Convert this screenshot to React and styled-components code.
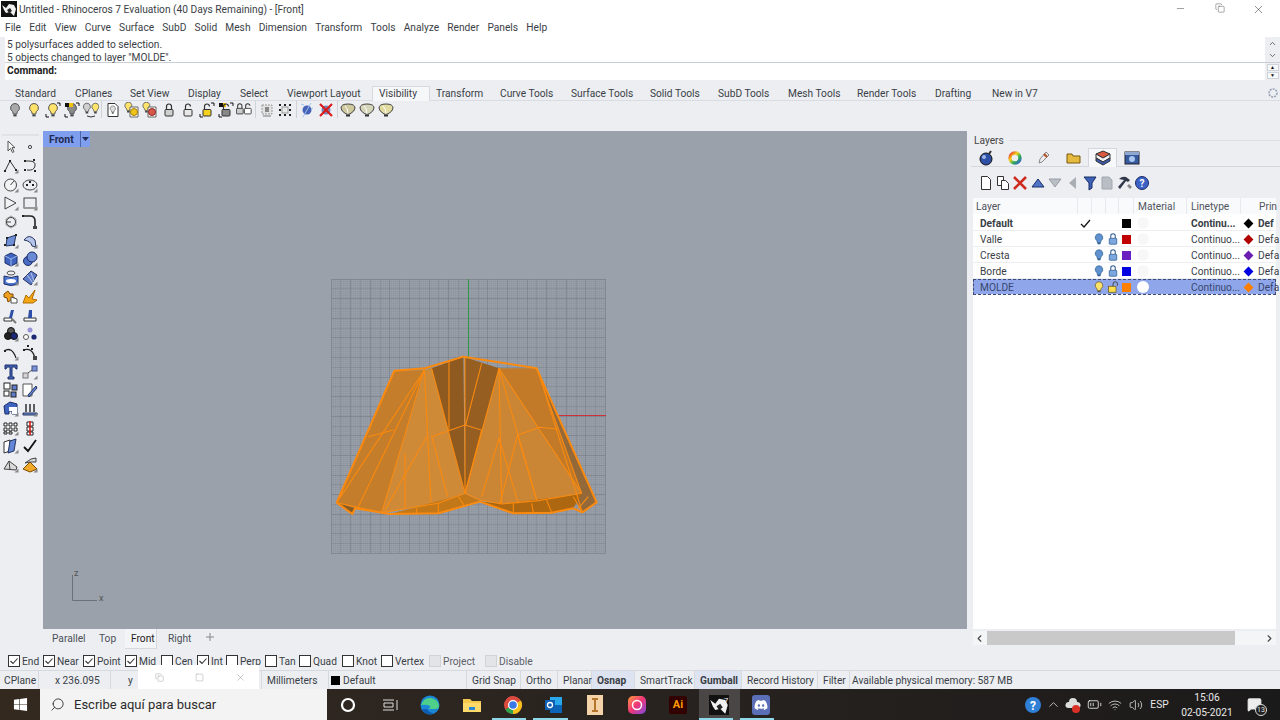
import React from "react";
import styled, { createGlobalStyle } from "styled-components";
import { FaWindows, FaDiscord } from "react-icons/fa";
import { ChevronUp, ChevronDown, ChevronLeft, ChevronRight, Search, Wifi, Volume2, Minus, Square, X, Copy, BatteryMedium, MessageSquare } from "lucide-react";

const Global = createGlobalStyle`
  html, body { margin: 0; padding: 0; width: 1280px; height: 720px; overflow: hidden; }
  * { box-sizing: border-box; }
  body { font-family: Roboto, "Noto Sans", sans-serif; font-size: 10.2px; color: #3a3e46; background: #eceef2; }
`;

const Shell = styled.div`
  position: relative;
  width: 1280px;
  height: 720px;
  display: flex;
  flex-direction: column;
  background: #eceef2;
`;

const TitleBar = styled.div`
  height: 18px;
  display: flex;
  align-items: center;
  background: #fff;
  padding-left: 1px;
`;
const TitleText = styled.span`
  margin-left: 2px;
  flex: 1;
`;
const WinButtons = styled.div`
  display: flex;
  color: #333;
  padding-right: 2px;
`;
const WinButton = styled.span`
  width: 39px;
  display: flex;
  justify-content: center;
`;
const MenuBar = styled.div`
  height: 19px;
  display: flex;
  align-items: center;
  gap: 8.2px;
  padding-left: 5px;
  background: #fff;
`;

const CommandPanel = styled.div`
  height: 43px;
  display: flex;
  flex-direction: column;
  margin-left: 5px;
`;
const LogRow = styled.div`
  height: 26px;
  display: flex;
  background: #fff;
  border-bottom: 1px solid #c9ced6;
`;
const PromptRow = styled.div`
  height: 17px;
  display: flex;
  background: #fff;
`;
const LogText = styled.div`
  flex: 1;
  padding: 1px 0 0 2px;
  line-height: 13px;
`;
const PromptText = styled.div`
  flex: 1;
  padding-left: 2px;
  font-weight: 700;
  line-height: 16px;
  color: #222;
`;
const ScrollCol = styled.div`
  width: 15px;
  background: #eceef2;
  display: flex;
  flex-direction: column;
  justify-content: space-around;
  align-items: center;
  color: #444;
`;
const MiniArrow = styled.span`
  width: 12px;
  height: 7px;
  background: #f7f8fa;
  border: 1px solid #d0d3d9;
  color: #111;
  font-size: 5px;
  line-height: 5px;
  text-align: center;
`;

const ToolTabs = styled.div`
  margin-top: 6px;
  height: 15px;
  display: flex;
  align-items: center;
  padding-left: 15px;
  border-bottom: 1px solid #d9dce2;
  isolation: isolate;
`;
const ToolTab = styled.span`
  position: relative;
  width: ${(p) => p.$w}px;
  flex: none;
  white-space: nowrap;
  &::before {
    content: "";
    display: ${(p) => (p.$active ? "block" : "none")};
    position: absolute;
    left: -7px;
    right: 6px;
    top: -2px;
    bottom: -2px;
    background: #f6f7f9;
    border: 1px solid #d6d9de;
    border-bottom: 0;
    z-index: -1;
  }
`;
const Gear = styled.span`
  margin-left: auto;
  margin-right: 1px;
  display: flex;
`;
const IconRow = styled.div`
  height: 19px;
  padding: 0 0 2px 6px;
  display: flex;
  align-items: center;
`;
const IconSlot = styled.span`
  width: ${(p) => p.$w || 18.8}px;
  height: 18px;
  flex: none;
  display: flex;
  align-items: center;
  justify-content: center;
`;
const Sep = styled.span`
  width: 1px;
  height: 17px;
  background: #cfd2d8;
  flex: none;
  margin: 0 1.2px;
`;

const Main = styled.div`
  margin-top: 11px;
  height: 520px;
  display: flex;
`;
const LeftBar = styled.div`
  width: 43px;
  flex: none;
  padding: 3px 0 0 1px;
`;
const Grip = styled.div`
  height: 2px;
  width: 37px;
  margin: 0 0 3px 1px;
  background: #dfe2e7;
`;
const LeftGrid = styled.div`
  display: grid;
  grid-template-columns: 19px 19px;
  grid-auto-rows: 18.7px;
  justify-items: center;
  align-items: center;
`;
const CenterCol = styled.div`
  width: 924px;
  flex: none;
  display: flex;
  flex-direction: column;
`;
const Viewport = styled.div`
  position: relative;
  height: 498px;
  background: #9aa1ab;
`;
const ViewSvg = styled.svg`
  display: block;
  width: 924px;
  height: 498px;
`;
const ViewLabel = styled.div`
  position: absolute;
  left: 0;
  top: 0;
  width: 47px;
  height: 16px;
  background: #7f9fee;
  color: #1f2b55;
  font-weight: 700;
  font-size: 10.5px;
  display: flex;
  align-items: center;
  padding-left: 6px;
  justify-content: space-between;
`;
const ViewArrow = styled.span`
  width: 10px;
  height: 16px;
  border-left: 1px solid #4c66a8;
  display: flex;
  align-items: center;
  justify-content: center;
`;

const LayerPanel = styled.div`
  margin-left: 6px;
  flex: 1;
  display: flex;
  flex-direction: column;
  min-width: 0;
`;
const PanelHead = styled.div`
  height: 16px;
  display: flex;
  align-items: center;
  gap: 5px;
  padding-left: 1px;
  color: #444;
  margin-top: 1px;
`;
const HeadLine = styled.span`
  flex: 1;
  height: 1px;
  background: #dcdfe4;
`;
const PanelTabs = styled.div`
  height: 19px;
  display: flex;
  margin-left: -2px;
  padding-left: 0.5px;
  border-bottom: 1px solid #d3d6dc;
  align-items: center;
`;
const PanelTab = styled.span`
  width: 29.2px;
  height: 19px;
  flex: none;
  display: flex;
  align-items: center;
  justify-content: center;
  background: ${(p) => (p.$active ? "#f7f8fa" : "transparent")};
  border: 1px solid ${(p) => (p.$active ? "#d3d6dc" : "transparent")};
  border-bottom: 0;
`;
const PanelIcons = styled.div`
  height: 31px;
  display: flex;
  align-items: center;
  padding-left: 4px;
`;
const LayerTable = styled.div`
  flex: 1;
  background: #fff;
  margin-right: 4px;
  display: flex;
  flex-direction: column;
`;
const LayerRow = styled.div`
  height: 16px;
  display: grid;
  grid-template-columns: 105px 14px 14px 13px 15px 53px 54px 1fr;
  align-items: center;
  white-space: nowrap;
  font-weight: ${(p) => (p.$bold ? 700 : 400)};
  border-bottom: 1px solid #eceef1;
  color: ${(p) => (p.$selected ? "#38466e" : "#3a3e46")};
  background: ${(p) => (p.$selected ? "#8fa6ea" : "#fff")};
  outline: ${(p) => (p.$selected ? "1px dashed #3f4a70" : "none")};
  outline-offset: -1px;
`;
const HeadRow = styled(LayerRow)`
  height: 17px;
  background: #f9fafb;
  border-bottom-color: #fff;
  color: #50545c;
`;
const Cell = styled.span`
  display: flex;
  align-items: center;
  justify-content: ${(p) => (p.$center ? "center" : "flex-start")};
  padding-left: ${(p) => p.$pad || 0}px;
  padding-top: ${(p) => (p.$rule ? 0 : 1)}px;
  height: 100%;
  border-right: ${(p) => (p.$rule ? "1px solid #e8eaee" : "0")};
`;
const Swatch = styled.span`
  width: 9px;
  height: 9px;
  flex: none;
  background: ${(p) => p.$c};
`;
const MaterialDot = styled.span`
  width: 12px;
  height: 12px;
  border-radius: 50%;
  background: ${(p) => (p.$on ? "#fff" : "#f7f7f8")};
`;
const Diamond = styled.span`
  width: 7px;
  height: 7px;
  transform: rotate(45deg);
  background: ${(p) => p.$c};
  flex: none;
  margin: 0 6px 0 4px;
`;
const TableFill = styled.div`
  flex: 1;
`;
const HScroll = styled.div`
  height: 14px;
  margin: 2px 4px 6px 0;
  background: #f4f5f7;
  display: flex;
  align-items: center;
  justify-content: space-between;
  color: #444;
  padding: 0 1px;
`;
const HThumb = styled.span`
  width: 248px;
  height: 14px;
  background: #c9c9c9;
  margin-right: 28px;
`;

const ViewTabs = styled.div`
  height: 22px;
  display: flex;
  align-items: center;
  padding: 0 0 4px 9px;
  isolation: isolate;
`;
const ViewTab = styled.span`
  position: relative;
  width: ${(p) => p.$w}px;
  flex: none;
  color: ${(p) => (p.$active ? "#222" : "#4a4e56")};
  &::before {
    content: "";
    display: ${(p) => (p.$active ? "block" : "none")};
    position: absolute;
    left: -6px;
    right: 11px;
    top: -4px;
    bottom: -5px;
    background: #f3f4f7;
    border: 1px solid #d6d9de;
    border-top: 0;
    border-left: 0;
    z-index: -1;
  }
`;

const OsnapBar = styled.div`
  height: 20px;
  display: flex;
  align-items: center;
  padding: 1px 0 0 8px;
  border-bottom: 1px solid #d6d9de;
`;
const Snap = styled.label`
  width: ${(p) => p.$w}px;
  flex: none;
  display: flex;
  align-items: center;
  gap: 2px;
  color: ${(p) => (p.$off ? "#5c6068" : "#3a3e46")};
`;
const Box = styled.span`
  width: 12px;
  height: 12px;
  flex: none;
  background: ${(p) => (p.$off ? "#e3e4e7" : "#fff")};
  border: 1px solid ${(p) => (p.$off ? "#d2d3d6" : "#333")};
  display: flex;
`;

const StatusBar = styled.div`
  height: 18px;
  display: flex;
`;
const StatusCell = styled.span`
  width: ${(p) => p.$w}px;
  flex: ${(p) => (p.$w ? "none" : 1)};
  display: flex;
  align-items: center;
  gap: 3px;
  padding-left: ${(p) => p.$pad ?? 4}px;
  white-space: nowrap;
  font-weight: ${(p) => (p.$on ? 700 : 400)};
  background: ${(p) => (p.$on ? "#dde3f0" : "transparent")};
  border-right: ${(p) => (p.$last ? 0 : "1px solid #d6d9de")};
`;
const SmallSwatch = styled.span`
  width: 9px;
  height: 9px;
  background: #000;
`;

const TaskBar = styled.div`
  height: 31px;
  display: flex;
  align-items: stretch;
  background: linear-gradient(90deg, #33291f 0%, #2a2420 45%, #1b1a1a 100%);
  color: #fff;
`;
const StartBtn = styled.span`
  width: 40px;
  display: flex;
  align-items: center;
  justify-content: center;
  flex: none;
`;
const SearchBox = styled.div`
  width: 287px;
  flex: none;
  background: #f3f3f3;
  color: #2b2b2b;
  display: flex;
  align-items: center;
  gap: 9px;
  padding-left: 10px;
  font-size: 13px;
`;
const TaskApps = styled.div`
  display: flex;
  width: 454px;
  flex: none;
`;
const TaskApp = styled.span`
  position: relative;
  width: 41.3px;
  flex: none;
  display: flex;
  align-items: center;
  justify-content: center;
  background: ${(p) => (p.$active ? "#4a4645" : "transparent")};
  &::after {
    content: "";
    display: ${(p) => (p.$open ? "block" : "none")};
    position: absolute;
    left: 0;
    right: 7px;
    bottom: 0;
    height: 2px;
    background: #8fd8ea;
  }
`;
const Tray = styled.div`
  flex: 1;
  display: flex;
  align-items: center;
  padding-left: 242px;
  color: #e8e8e8;
`;
const TraySlot = styled.span`
  width: ${(p) => p.$w || 20.5}px;
  flex: none;
  display: flex;
  justify-content: center;
  align-items: center;
`;
const Clock = styled.span`
  width: 62px;
  margin-left: 3px;
  text-align: center;
  line-height: 15px;
  flex: none;
`;
const NoteBadge = styled.span`
  position: absolute;
  right: 3px;
  top: 15px;
  width: 12px;
  height: 12px;
  border-radius: 50%;
  border: 1px solid #ddd;
  background: #222;
  font-size: 7px;
  line-height: 10px;
  text-align: center;
`;
const NoteSlot = styled.span`
  position: relative;
  width: 32px;
  height: 100%;
  flex: none;
  display: flex;
  align-items: center;
  justify-content: center;
`;
const AiTile = styled.span`
  width: 18px;
  height: 18px;
  border-radius: 2px;
  background: #330000;
  color: #ff9a00;
  font-weight: 700;
  font-size: 11px;
  display: flex;
  align-items: center;
  justify-content: center;
`;
const DiscordTile = styled.span`
  width: 18px;
  height: 20px;
  border-radius: 3px;
  background: #5b6fb8;
  display: flex;
  align-items: center;
  justify-content: center;
`;
const GhostWindow = styled.div`
  position: absolute;
  left: 138px;
  top: 665px;
  width: 121px;
  height: 24px;
  background: #fff;
  display: flex;
  align-items: center;
  color: #888;
`;
const GhostBtn = styled.span`
  width: 39px;
  margin-left: 3px;
  display: flex;
  justify-content: center;
`;

// ---- drawn icons ----
const Ico = ({ s = 16, children }) => (
  <svg width={s} height={s} viewBox="0 0 16 16">{children}</svg>
);
const Bulb = ({ c = "#ffe36a", o = "#555" }) => (
  <>
    <path d="M8 1.5a4.4 4.4 0 0 0-2.4 8.1L6.3 12h3.4l.7-2.4A4.4 4.4 0 0 0 8 1.5z" fill={c} stroke={o} />
    <rect x="6.4" y="12.4" width="3.2" height="2" fill="#444" />
  </>
);
const FatBulb = ({ c }) => (
  <>
    <path d="M1 6q0-4 7-4t7 4q0 3-5 6H6q-5-3-5-6z" fill={c} stroke="#444" />
    <path d="M5 4q3 2 3 8" fill="none" stroke="#fff" />
    <rect x="6" y="12.5" width="4" height="2" fill="#333" />
  </>
);
const Lock = ({ c = "#e4e4e4", o = "#333", open }) => (
  <>
    <rect x="4" y="7.5" width="8" height="6.5" rx="1" fill={c} stroke={o} />
    <path d={open ? "M5.5 7.5V4.5a2.5 2.5 0 0 1 5 0" : "M5.5 7.5V4.5a2.5 2.5 0 0 1 5 0v3"} fill="none" stroke={o} strokeWidth="1.2" />
  </>
);
const Marks = () => <path d="M1 12v3h3M15 4V1h-3" fill="none" stroke="#111" />;
const Doc = () => <path d="M3 1.5h7l3 3v10H3z" fill="#fff" stroke="#333" />;

const topIcons = [
  <Ico><Bulb c="#a9a9a9" /></Ico>,
  <Ico><Bulb /></Ico>,
  <Ico><Bulb /><Marks /></Ico>,
  <Ico><Bulb c="#8a8a8a" /><rect x="1" y="1" width="5" height="4" fill="#111" /><rect x="5" y="1" width="4" height="4" fill="#f2c200" /><Marks /></Ico>,
  <Ico><g transform="translate(-2.5 0) scale(.8)"><Bulb c="#cfcfcf" /></g><g transform="translate(6 0) scale(.8)"><Bulb /></g><path d="M4 14q4 2 8 0" fill="none" stroke="#333" /></Ico>,
  "sep",
  <Ico><Doc /><g transform="translate(3 3) scale(.6)"><Bulb c="#ddd" /></g></Ico>,
  <Ico><g transform="translate(-2 -1) scale(.8)"><Bulb /></g><path d="M6 5h8v10H6z" fill="#fff" stroke="#666" /><circle cx="10" cy="10" r="3.5" fill="#f0c419" stroke="#a3800c" /></Ico>,
  <Ico><g transform="translate(-2 -1) scale(.8)"><Bulb /></g><path d="M6 5h8v10H6z" fill="#fff" stroke="#666" /><circle cx="10" cy="10" r="3.5" fill="#d9584a" stroke="#8a2b22" /></Ico>,
  <Ico><Lock c="#cfcfcf" /></Ico>,
  <Ico><Lock c="#e8e8e8" open /></Ico>,
  <Ico><Lock c="#f5d21f" open /><Marks /></Ico>,
  <Ico><rect x="1" y="1" width="4" height="4" fill="#111" /><rect x="5" y="1" width="3" height="4" fill="#f2c200" /><Lock c="#888" open /><Marks /></Ico>,
  <Ico><g transform="translate(-3 0) scale(.85)"><Lock c="#ccc" /></g><g transform="translate(5 0) scale(.85)"><Lock c="#fff" open /></g></Ico>,
  "sep",
  <Ico><rect x="3" y="3" width="10" height="9" fill="#e3e3e3" stroke="#999" strokeDasharray="2 1" /><rect x="6" y="5" width="4" height="5" fill="#888" /><path d="M4 14h8" stroke="#777" /></Ico>,
  <Ico><path d="M2 2h2v2H2zM7 2h2v2H7zM12 2h2v2h-2zM2 7h2v2H2zM12 7h2v2h-2zM2 12h2v2H2zM7 12h2v2H7zM12 12h2v2h-2z" fill="#222" /><rect x="5" y="5" width="6" height="6" fill="#e8e8e8" stroke="#999" /></Ico>,
  "sep",
  <Ico><circle cx="8" cy="8" r="4.5" fill="#4663b8" /><path d="M12 1l-8 14M2 2l3 1M14 6l-2 1" stroke="#9cc3f0" /></Ico>,
  <Ico><circle cx="8" cy="8" r="4.5" fill="#7a86b5" /><path d="M2 2l12 12M14 2L2 14" stroke="#d81a1a" strokeWidth="2.2" /></Ico>,
  "sep",
  <Ico><FatBulb c="#cfc9a0" /></Ico>,
  <Ico><FatBulb c="#d6d6bb" /></Ico>,
  <Ico><FatBulb c="#e3dca0" /></Ico>,
];

const Corner = () => <path d="M15.5 15.5h-4l4-4z" fill="#888" />;
const d = (x, y) => <rect x={x - 1} y={y - 1} width="2" height="2" fill="#222" />;
const leftIcons = [
  <Ico><path d="M5 2v10l2.5-2.5 2 4 1.5-.8-2-4H12z" fill="#f6f6f6" stroke="#555" /></Ico>,
  <Ico><circle cx="8" cy="8" r="1.6" fill="none" stroke="#444" /></Ico>,
  <Ico><path d="M2 13L7 3l6 9" fill="none" stroke="#333" />{d(2, 13)}{d(7, 3)}{d(13, 12)}<Corner /></Ico>,
  <Ico><path d="M3 3h4q7 0 6 5t-8 4" fill="none" stroke="#333" />{d(3, 3)}{d(12, 2)}{d(3, 12)}{d(13, 13)}</Ico>,
  <Ico><circle cx="7.5" cy="8" r="6" fill="#f2f3f5" stroke="#444" /><path d="M7.5 8l3.5-4" stroke="#444" /><Corner /></Ico>,
  <Ico><ellipse cx="8" cy="8" rx="7" ry="5" fill="none" stroke="#444" />{d(5, 8)}{d(11, 8)}{d(8, 5)}<Corner /></Ico>,
  <Ico><path d="M2 2l11 6-11 6z" fill="#f2f3f5" stroke="#444" /><Corner /></Ico>,
  <Ico><rect x="2" y="3" width="12" height="10" fill="#eceef1" stroke="#444" /><path d="M2 13h12" stroke="#999" strokeWidth="2" /><Corner /></Ico>,
  <Ico><path d="M8 2l5 3v6l-5 3-5-3V5z" fill="none" stroke="#999" /><circle cx="8" cy="8" r="4.5" fill="none" stroke="#444" /><path d="M3 8h5" stroke="#444" /></Ico>,
  <Ico><path d="M1 2h7q5 0 5 5v5" fill="none" stroke="#222" strokeWidth="1.6" />{d(1, 2)}<rect x="11" y="12" width="4" height="3" fill="#444" /></Ico>,
  <Ico><path d="M4 5l9-3-2 10-8 1z" fill="#6f8fd6" stroke="#26345f" />{d(4, 5)}{d(13, 2)}{d(11, 12)}{d(2, 12)}<Corner /></Ico>,
  <Ico><path d="M2 7q5-7 11 0l1 7-4-1q-1-5-8-6z" fill="#b6c6ea" stroke="#26345f" /><Corner /></Ico>,
  <Ico><path d="M2 5l6-3 6 3v7l-6 3-6-3z" fill="#3f64bf" stroke="#1b2c66" /><path d="M2 5l6 3 6-3M8 8v7" stroke="#9cb4ea" fill="none" /><Corner /></Ico>,
  <Ico><circle cx="6" cy="10" r="4.5" fill="#496cc4" stroke="#1b2c66" /><circle cx="10" cy="6" r="5" fill="#6b8ad6" stroke="#1b2c66" /><Corner /></Ico>,
  <Ico><ellipse cx="8" cy="3" rx="4" ry="2" fill="none" stroke="#555" /><path d="M1 6v8q7 3 14 0V6q-7 3-14 0z" fill="#4d77d3" stroke="#1b2c66" /><ellipse cx="8" cy="11" rx="5" ry="2" fill="#fff" /><Corner /></Ico>,
  <Ico><path d="M1 9l8-8 6 4-6 10z" fill="#5e7cc9" stroke="#26345f" /><path d="M5 5l6 8M9 3l3 8" stroke="#b6c6ea" /><Corner /></Ico>,
  <Ico><path d="M1 5l4-3 2 3 3 0v3l3 2-3 3-2-2-3 2-1-4-3-1z" fill="#f0a020" stroke="#7a4a00" /><path d="M8 8l6 2v4H8z" fill="#fff" stroke="#555" /></Ico>,
  <Ico><path d="M1 14l3-8 3 3 6-8-3 9 5 1-4 3z" fill="#f5a814" stroke="#b06b00" /></Ico>,
  <Ico><path d="M1 10h8v3H1z" fill="#fff" stroke="#333" /><path d="M8 2h3l-2 8H6z" fill="#2e4ea8" /><path d="M9 11l4 4" stroke="#777" strokeWidth="2" /></Ico>,
  <Ico><path d="M2 10h12v3H2z" fill="#fff" stroke="#333" /><path d="M7 2h3v8H6z" fill="#2e4ea8" /></Ico>,
  <Ico><circle cx="8" cy="5" r="3.5" fill="#555" stroke="#111" /><circle cx="5" cy="10" r="3.5" fill="#222" stroke="#111" /><circle cx="11" cy="10" r="3.5" fill="#1c2a75" stroke="#111" /><Corner /></Ico>,
  <Ico><circle cx="8" cy="4" r="2.5" fill="#9a94d6" /><circle cx="4" cy="11" r="2.5" fill="#fff" stroke="#555" /><circle cx="12" cy="11" r="2.6" fill="#1c2a75" /></Ico>,
  <Ico><path d="M1 6q8-5 12 7" fill="none" stroke="#222" strokeWidth="1.3" />{d(2, 6)}<Corner /></Ico>,
  <Ico><path d="M1 5q10-3 12 9" fill="none" stroke="#222" strokeWidth="1.3" />{d(6, 1)}{d(10, 4)}{d(2, 5)}<rect x="11" y="11" width="4" height="4" fill="#444" /></Ico>,
  <Ico><path d="M2 1h12v4h-1l-1-2H9v10h2v2H5v-2h2V3H4L3 5H2z" fill="#4668bf" stroke="#1b2c66" /></Ico>,
  <Ico><rect x="1" y="9" width="5" height="5" fill="#d5d5d5" stroke="#777" /><rect x="10" y="2" width="5" height="5" fill="#7d93d4" stroke="#3c4f88" /><path d="M6 9l4-3" stroke="#555" /><Corner /></Ico>,
  <Ico><rect x="1" y="1" width="6" height="6" fill="#fff" stroke="#222" /><rect x="9" y="3" width="5" height="5" fill="#5e7cc9" stroke="#222" /><rect x="1" y="9" width="5" height="5" fill="#fff" stroke="#222" /><rect x="8" y="10" width="5" height="5" fill="#5e7cc9" stroke="#222" /></Ico>,
  <Ico><path d="M1 2h9v12H1z" fill="#fff" stroke="#555" /><path d="M6 13l8-9 1 2-8 9z" fill="#6286d8" stroke="#26345f" /></Ico>,
  <Ico><path d="M1 5l6-4 7 2v10H9v-3H6v3H2z" fill="#3f64bf" stroke="#1b2c66" /><path d="M6 6h8v7H9v-3H6z" fill="#fff" /><Corner /></Ico>,
  <Ico><path d="M1 12h14v2H1z" fill="#6f8fd6" stroke="#26345f" /><path d="M4 3v8M8 3v8M12 3v8" stroke="#222" strokeWidth="1.4" /><Corner /></Ico>,
  <Ico><path d="M1 3h3v3H1zM6 3h3v3H6zM11 3h3v3h-3zM1 8h3v3H1zM6 8h3v3H6zM11 8h3v3h-3zM1 12h3v2H1zM6 12h3v2H6z" fill="#fff" stroke="#222" /><Corner /></Ico>,
  <Ico><path d="M5 2h6v4H5zM5 7h6v4H5zM5 12h6v3H5z" fill="#fff" stroke="#222" /><path d="M8 1v14" stroke="#d81a1a" strokeWidth="1.6" /></Ico>,
  <Ico><path d="M1 4l6-2v11l-6 2z" fill="#fff" stroke="#333" /><path d="M7 3l6-2-2 12-6 2z" fill="#6286d8" stroke="#26345f" /><Corner /></Ico>,
  <Ico><path d="M2 9l4 4 8-11" fill="none" stroke="#111" strokeWidth="1.8" /></Ico>,
  <Ico><path d="M1 12l5-8 8 6-1 3z" fill="#dadada" stroke="#444" /><path d="M6 4l1 9" stroke="#444" /><Corner /></Ico>,
  <Ico><path d="M8 5l7 7-7 3-7-3z" fill="#f0a828" stroke="#7a4a00" /><path d="M3 6l6-4 5-1v4H8z" fill="#d8d8d8" stroke="#444" /><Corner /></Ico>,
];

const panelTabs = [
  <Ico><circle cx="8" cy="9" r="6" fill="#2d4fa5" stroke="#111" /><circle cx="6" cy="7" r="2" fill="#9fb6ea" /><path d="M11 4l2-3" stroke="#333" strokeWidth="2" /></Ico>,
  <Ico><circle cx="8" cy="8" r="5" fill="none" stroke="url(#rainbow)" strokeWidth="3.4" /></Ico>,
  <Ico><path d="M3 13l1-4 6-7 3 3-7 7z" fill="#eee" stroke="#888" /><path d="M8 4l3 3" stroke="#b3552b" strokeWidth="2.4" /></Ico>,
  <Ico><path d="M1 4h5l1 2h7v7H1z" fill="#e6b93f" stroke="#7a5a10" /></Ico>,
  <Ico><path d="M1 4l7-3 7 3-7 4z" fill="#d8593f" stroke="#333" /><path d="M1 4v4l7 4 7-4V4l-7 4z" fill="#f0f0f0" stroke="#333" /><path d="M1 8v3l7 4 7-4V8l-7 4z" fill="#3b5bb0" stroke="#333" /></Ico>,
  <Ico><rect x="1" y="2" width="14" height="12" fill="#365a9e" stroke="#223" /><rect x="1" y="2" width="14" height="3" fill="#8fa8d0" /><circle cx="8" cy="9" r="3" fill="#a9c6f0" /></Ico>,
];
const panelIcons = [
  <Ico><path d="M3.5 1.5h6l3 3v10h-9z" fill="#fff" stroke="#333" /></Ico>,
  <Ico><path d="M2.5 1.5h6v9h-6z" fill="#fff" stroke="#333" /><path d="M6.5 5.5h4l3 3v6h-7z" fill="#fff" stroke="#333" /></Ico>,
  <Ico><path d="M2 2l12 12M14 2L2 14" stroke="#cf2a1d" strokeWidth="2.6" /></Ico>,
  <Ico><path d="M8 4l6 8H2z" fill="#4f74c8" stroke="#1b2c66" /></Ico>,
  <Ico><path d="M2 4h12l-6 8z" fill="#b9bdc4" stroke="#9a9ea6" /></Ico>,
  <Ico><path d="M11 2v12L4 8z" fill="#a9adb4" /></Ico>,
  <Ico><path d="M2 2h12L10 8v5l-3 2V8z" fill="#3d62b5" stroke="#1b2c66" /></Ico>,
  <Ico><path d="M3 2h7l3 3v9H3z" fill="#b9bdc4" stroke="#a2a6ad" /></Ico>,
  <Ico><path d="M2 4q3-3 7-2l4 3-2 2-2-1-6 8-2-2 6-7z" fill="#30384a" /><path d="M12 9l3 3-2 2-3-3z" fill="#888" /></Ico>,
  <Ico><circle cx="8" cy="8" r="6.5" fill="#3d62c5" stroke="#1b2c66" /><text x="8" y="12" fontSize="10" fontWeight="700" textAnchor="middle" fill="#fff">?</text></Ico>,
];

const RhinoLogo = ({ s = 16, seven }) => (
  <svg width={s} height={s} viewBox="0 0 16 16">
    <rect width="16" height="16" fill="#111" />
    <path d="M1 4l4 3 3-4 5 1 2 4-2 7-4-4-4 1-2-3z" fill="#f1f1f1" />
    <path d="M6 9l3-2 2 3-3 2z" fill="#222" />
    {seven && <text x="12" y="6" fontSize="6" fill="#fff">7</text>}
  </svg>
);

const CHECK = <svg width="10" height="10" viewBox="0 0 10 10"><path d="M1.5 5l2.5 2.5 4.5-5" fill="none" stroke="#333" strokeWidth="1.1" /></svg>;

const BULB_BLUE = <Ico s={12}><path d="M8 1a5 5 0 0 0-3 9l1 3h4l1-3a5 5 0 0 0-3-9z" fill="#5f93d0" stroke="#2f5c95" /><rect x="6" y="13" width="4" height="2" fill="#2f5c95" /></Ico>;
const LOCK_BLUE = <Ico s={12}><rect x="3" y="7" width="10" height="8" rx="1" fill="#7ba7dc" stroke="#2f5c95" /><path d="M5 7V4a3 3 0 0 1 6 0v3" fill="none" stroke="#2f5c95" strokeWidth="1.4" /></Ico>;
const BULB_Y = <Ico s={12}><path d="M8 1a5 5 0 0 0-3 9l1 3h4l1-3a5 5 0 0 0-3-9z" fill="#ffe26a" stroke="#6a5a20" /><rect x="6" y="13" width="4" height="2" fill="#555" /></Ico>;
const LOCK_Y = <Ico s={12}><rect x="2" y="7" width="10" height="8" fill="#ffe04a" stroke="#6a5a20" /><path d="M8 7V4a3 3 0 0 1 6 0v2" fill="none" stroke="#444" strokeWidth="1.3" /></Ico>;

const layers = [
  { name: "Default", c: "#000", bold: true, check: true, line: "Continu...", pc: "#000", print: "Def" },
  { name: "Valle", c: "#c00000", line: "Continuo...", pc: "#b00000", print: "Defa" },
  { name: "Cresta", c: "#6a1fc0", line: "Continuo...", pc: "#6a1fb0", print: "Defa" },
  { name: "Borde", c: "#0000e0", line: "Continuo...", pc: "#0000e0", print: "Defa" },
  { name: "MOLDE", c: "#ff8000", line: "Continuo...", pc: "#ff8000", print: "Defa", selected: true },
];

const toolTabs = [
  ["Standard", 60], ["CPlanes", 55], ["Set View", 58], ["Display", 52], ["Select", 47], ["Viewport Layout", 92],
  ["Visibility", 57, true], ["Transform", 64], ["Curve Tools", 71], ["Surface Tools", 79], ["Solid Tools", 68],
  ["SubD Tools", 70], ["Mesh Tools", 69], ["Render Tools", 78], ["Drafting", 57], ["New in V7", 60],
];
const menus = ["File", "Edit", "View", "Curve", "Surface", "SubD", "Solid", "Mesh", "Dimension", "Transform", "Tools", "Analyze", "Render", "Panels", "Help"];
const snaps = [
  ["End", 35, 1], ["Near", 40, 1], ["Point", 42, 1], ["Mid", 36, 1], ["Cen", 36, 0], ["Int", 29, 1], ["Perp", 39, 0],
  ["Tan", 34, 0], ["Quad", 43, 0], ["Knot", 39, 0], ["Vertex", 48, 0], ["Project", 56, 0, 1], ["Disable", 70, 0, 1],
];
const statusItems = [
  ["Grid Snap", 54], ["Ortho", 37], ["Planar", 34], ["Osnap", 43, 1], ["SmartTrack", 60], ["Gumball", 47, 1],
  ["Record History", 76], ["Filter", 32],
];

const gridLines = Array.from({ length: 29 }, (_, i) => i * 9.8);

const faces = [
  ["35,488 208,92 300,90 170,518 90,505", "#c47d2a"],
  ["300,90 320,85 420,460 340,490 170,518", "#cf8a38"],
  ["320,85 415,50 420,460", "#8f5a20"],
  ["420,52 522,85 420,460", "#965e20"],
  ["522,85 770,460 640,482 530,492 465,480 420,460", "#cb8635"],
  ["522,85 635,85 770,460", "#c27a28"],
  ["635,85 815,487 772,517 745,470 770,460", "#94693a"],
  ["195,522 420,462 465,482 340,520", "#c27818"],
  ["465,484 530,492 770,462 745,505 680,518 565,520", "#ad6710"],
  ["35,488 90,505 82,522", "#8b5a20"],
];
const edges = [
  "35,488 208,92 300,85 415,50 635,85 815,487 772,517 745,505 680,518 565,520 465,485 340,520 195,522 90,505 82,522 35,488",
  "35,488 300,88", "100,500 298,90", "170,518 298,88", "298,88 318,488", "320,85 420,460", "420,52 420,460",
  "522,85 420,460", "522,85 530,490", "522,85 770,460", "522,85 635,480", "635,85 770,460", "640,95 772,517",
  "35,488 170,518 340,490 420,460 465,480 530,492 640,482 770,460", "372,60 372,270", "320,290 420,255 470,270 420,460",
  "578,285 645,262 700,268", "578,285 525,490", "578,285 635,480", "522,295 470,470", "522,295 580,490", "305,290 180,510",
  "240,340 240,505", "130,290 205,270", "320,290 368,470", "470,70 422,255", "275,505 275,522", "340,490 340,520", "400,470 420,500",
  "565,490 565,520", "620,490 625,518", "665,480 680,518", "745,470 772,517", "790,470 760,505",
];

const Model = () => (
  <g transform="translate(325 340) scale(.3333)">
    {faces.map(([p, c]) => <polygon key={p} points={p} fill={c} />)}
    {edges.slice(1).map((p) => <polyline key={p} points={p} fill="none" stroke="#fb8a0e" strokeWidth="3.2" />)}
    <polyline points={edges[0]} fill="none" stroke="#fb8a0e" strokeWidth="6" strokeLinejoin="round" />
  </g>
);

const Scene = () => (
  <ViewSvg viewBox="43 131 924 498">
    <defs>
      <pattern id="fineGrid" x="331" y="279" width="2" height="2" patternUnits="userSpaceOnUse">
        <rect width="1" height="2" fill="#8d949e" opacity=".55" />
        <rect width="2" height="1" fill="#8d949e" opacity=".55" />
      </pattern>
    </defs>
    <rect x="331" y="279" width="275" height="274" fill="url(#fineGrid)" />
    {gridLines.map((v, i) => (
      <g key={v} stroke="#7c838d" strokeWidth="1" opacity={i % 2 ? 0.45 : 0.75}>
        <line x1={Math.floor(331 + v) + 0.5} y1="279" x2={Math.floor(331 + v) + 0.5} y2="553" />
        <line x1="331" y1={Math.floor(279 + v) + 0.5} x2="606" y2={Math.floor(279 + v) + 0.5} />
      </g>
    ))}
    <line x1="468.5" y1="279" x2="468.5" y2="415" stroke="#2f9a48" />
    <rect x="468" y="415" width="138" height="1" fill="#cf3038" />
    <Model />
    <path d="M72.5 575v25.5H97" fill="none" stroke="#6b7079" />
    <text x="74" y="576" fontSize="9" fill="#555">z</text>
    <text x="99" y="601" fontSize="9" fill="#555">x</text>
  </ViewSvg>
);

const Tile = ({ children }) => <svg width="20" height="20" viewBox="0 0 20 20">{children}</svg>;

const App = () => (
  <Shell>
    <Global />
    <svg width="0" height="0" style={{ position: "absolute" }}>
      <defs>
        <linearGradient id="rainbow" x1="0" y1="0" x2="1" y2="1">
          <stop offset="0" stopColor="#e8382c" /><stop offset=".35" stopColor="#f5d020" />
          <stop offset=".65" stopColor="#30b050" /><stop offset="1" stopColor="#3060d0" />
        </linearGradient>
        <linearGradient id="cloudGrad" x1="0" y1="0" x2="1" y2="1">
          <stop offset="0" stopColor="#ff9a3c" /><stop offset=".5" stopColor="#f0357a" /><stop offset="1" stopColor="#7a4de0" />
        </linearGradient>
      </defs>
    </svg>
    <TitleBar>
      <RhinoLogo />
      <TitleText>Untitled - Rhinoceros 7 Evaluation (40 Days Remaining) - [Front]</TitleText>
      <WinButtons>
        <WinButton><Minus size={11} strokeWidth={1} /></WinButton>
        <WinButton><Copy size={10} strokeWidth={1} /></WinButton>
        <WinButton><X size={13} strokeWidth={1} /></WinButton>
      </WinButtons>
    </TitleBar>
    <MenuBar>{menus.map((m) => <span key={m}>{m}</span>)}</MenuBar>
    <CommandPanel>
      <LogRow>
        <LogText>
          <div>5 polysurfaces added to selection.</div>
          <div>5 objects changed to layer "MOLDE".</div>
        </LogText>
        <ScrollCol><ChevronUp size={9} /><ChevronDown size={9} /></ScrollCol>
      </LogRow>
      <PromptRow>
        <PromptText>Command:</PromptText>
        <ScrollCol><MiniArrow>▲</MiniArrow><MiniArrow>▼</MiniArrow></ScrollCol>
      </PromptRow>
    </CommandPanel>
    <ToolTabs>
      {toolTabs.map(([t, w, active]) => <ToolTab key={t} $w={w} $active={active}>{t}</ToolTab>)}
      <Gear><svg width="12" height="12" viewBox="0 0 12 12"><circle cx="6" cy="6" r="4" fill="none" stroke="#9aa3b5" strokeWidth="1.6" strokeDasharray="2 1" /></svg></Gear>
    </ToolTabs>
    <IconRow>
      {topIcons.map((ic, i) => (ic === "sep" ? <Sep key={i} /> : <IconSlot key={i}>{ic}</IconSlot>))}
    </IconRow>
    <Main>
      <LeftBar>
        <Grip />
        <LeftGrid>{leftIcons.map((ic, i) => <span key={i}>{ic}</span>)}</LeftGrid>
      </LeftBar>
      <CenterCol>
        <Viewport>
          <Scene />
          <ViewLabel>
            Front
            <ViewArrow><svg width="7" height="4" viewBox="0 0 7 4"><path d="M0 0h7L3.5 4z" fill="#1f2b55" /></svg></ViewArrow>
          </ViewLabel>
        </Viewport>
        <ViewTabs>
          <ViewTab $w={47}>Parallel</ViewTab>
          <ViewTab $w={32}>Top</ViewTab>
          <ViewTab $w={37} $active>Front</ViewTab>
          <ViewTab $w={37}>Right</ViewTab>
          <ViewTab $w={14}>
            <svg width="10" height="10" viewBox="0 0 10 10"><path d="M5 1v8M1 5h8" stroke="#888" /></svg>
          </ViewTab>
        </ViewTabs>
      </CenterCol>
      <LayerPanel>
        <PanelHead>Layers<HeadLine /></PanelHead>
        <PanelTabs>
          {panelTabs.map((ic, i) => <PanelTab key={i} $active={i === 4}>{ic}</PanelTab>)}
        </PanelTabs>
        <PanelIcons>
          {panelIcons.map((ic, i) => <IconSlot key={i} $w={17.4}>{ic}</IconSlot>)}
        </PanelIcons>
        <LayerTable>
          <HeadRow>
            <Cell $pad={3} $rule>Layer</Cell><Cell $rule /><Cell $rule /><Cell $rule /><Cell $rule />
            <Cell $pad={4} $rule>Material</Cell><Cell $pad={4} $rule>Linetype</Cell><Cell $pad={18}>Prin</Cell>
          </HeadRow>
          {layers.map((l) => (
            <LayerRow key={l.name} $bold={l.bold} $selected={l.selected}>
              <Cell $pad={7}>{l.name}</Cell>
              <Cell $center>{l.check && <svg width="11" height="9" viewBox="0 0 11 9"><path d="M1 5l3 3 6-7" fill="none" stroke="#111" strokeWidth="1.2" /></svg>}</Cell>
              <Cell $center>{l.check ? null : l.selected ? BULB_Y : BULB_BLUE}</Cell>
              <Cell $center>{l.check ? null : l.selected ? LOCK_Y : LOCK_BLUE}</Cell>
              <Cell $center><Swatch $c={l.c} /></Cell>
              <Cell $pad={3}><MaterialDot $on={l.selected} /></Cell>
              <Cell $pad={4}>{l.line}</Cell>
              <Cell><Diamond $c={l.pc} />{l.print}</Cell>
            </LayerRow>
          ))}
          <TableFill />
        </LayerTable>
        <HScroll>
          <ChevronLeft size={11} strokeWidth={2.4} />
          <HThumb />
          <ChevronRight size={11} strokeWidth={2.4} />
        </HScroll>
      </LayerPanel>
    </Main>
    <OsnapBar>
      {snaps.map(([t, w, on, off]) => (
        <Snap key={t} $w={w} $off={off}><Box $off={off}>{on ? CHECK : null}</Box>{t}</Snap>
      ))}
    </OsnapBar>
    <StatusBar>
      <StatusCell $w={39}>CPlane</StatusCell>
      <StatusCell $w={72} $pad={16}>x 236.095</StatusCell>
      <StatusCell $w={151} $pad={17}>y</StatusCell>
      <StatusCell $w={67} $pad={5}>Millimeters</StatusCell>
      <StatusCell $w={138} $pad={2}><SmallSwatch />Default</StatusCell>
      {statusItems.map(([t, w, on]) => <StatusCell key={t} $w={w} $on={on} $pad={5}>{t}</StatusCell>)}
      <StatusCell $last $pad={2}>Available physical memory: 587 MB</StatusCell>
    </StatusBar>
    <TaskBar>
      <StartBtn><FaWindows size={15} color="#fff" /></StartBtn>
      <SearchBox><Search size={15} strokeWidth={1.4} style={{ transform: "scaleX(-1)" }} />Escribe aquí para buscar</SearchBox>
      <TaskApps>
        <TaskApp><Tile><circle cx="10" cy="10" r="6" fill="none" stroke="#fff" strokeWidth="2.2" /></Tile></TaskApp>
        <TaskApp><Tile><path d="M4 5h11M4 15h11M5 8h9v4H5zM18 5v10" fill="none" stroke="#ddd" /></Tile></TaskApp>
        <TaskApp><Tile><circle cx="10" cy="10" r="9.5" fill="#1b87d6" /><path d="M1 10q3-8 10-7 7 1 8 8 0 3-4 3H8q3-1 2-3-3-2-9-1z" fill="#4fd08a" /><path d="M7 14q2 4 7 4l-3 1.5q-6 0-9-5z" fill="#0d5bb0" /></Tile></TaskApp>
        <TaskApp><Tile><path d="M1 4h7l2 2h9v11H1z" fill="#f4c84c" /><rect x="1" y="8" width="18" height="9" fill="#ffd96a" /><rect x="7" y="12" width="6" height="3" fill="#2a86d6" /></Tile></TaskApp>
        <TaskApp $open><Tile>
          <circle cx="10" cy="10" r="9" fill="#dd4b3e" />
          <path d="M10 10L2.2 14.5A9 9 0 0 0 10 19z" fill="#2ea44f" />
          <path d="M10 10v9a9 9 0 0 0 7.8-13.5z" fill="#f6c01c" />
          <circle cx="10" cy="10" r="4.4" fill="#3b78e7" stroke="#fff" strokeWidth="1.3" />
        </Tile></TaskApp>
        <TaskApp $open><Tile>
          <rect x="6" y="2" width="12" height="16" fill="#28a8ea" /><rect x="6" y="10" width="12" height="8" fill="#0a64b8" />
          <rect x="1" y="5" width="10" height="10" fill="#0f5fb4" /><circle cx="6" cy="10" r="2.5" fill="none" stroke="#fff" strokeWidth="1.3" />
        </Tile></TaskApp>
        <TaskApp><Tile><rect x="2" y="0" width="16" height="20" fill="#f4d3a8" /><path d="M7 4h6M10 4v12M7 16h6" stroke="#b5752c" strokeWidth="2" /></Tile></TaskApp>
        <TaskApp><Tile>
          <rect x="1" y="1" width="18" height="18" rx="5" fill="url(#cloudGrad)" />
          <circle cx="10" cy="10" r="4.5" fill="none" stroke="#fff" strokeWidth="1.5" />
        </Tile></TaskApp>
        <TaskApp><AiTile>Ai</AiTile></TaskApp>
        <TaskApp $open $active><RhinoLogo s={20} seven /></TaskApp>
        <TaskApp $open><DiscordTile><FaDiscord size={14} color="#fff" /></DiscordTile></TaskApp>
      </TaskApps>
      <Tray>
        <TraySlot><Tile><circle cx="10" cy="10" r="8" fill="#2f7fd6" /><text x="10" y="14.5" fontSize="12" fontWeight="700" textAnchor="middle" fill="#fff">?</text></Tile></TraySlot>
        <TraySlot><ChevronUp size={15} strokeWidth={1.2} /></TraySlot>
        <TraySlot><Tile><path d="M4 13a3 3 0 0 1 1-6 4 4 0 0 1 8 0 3 3 0 0 1 1 6z" fill="#ddd" /><circle cx="12" cy="14" r="4" fill="#d93025" /></Tile></TraySlot>
        <TraySlot><BatteryMedium size={15} strokeWidth={1.4} /></TraySlot>
        <TraySlot><Wifi size={14} strokeWidth={1.3} /></TraySlot>
        <TraySlot><Volume2 size={14} strokeWidth={1.3} /></TraySlot>
        <TraySlot $w={27}>ESP</TraySlot>
        <Clock>15:06<br />02-05-2021</Clock>
        <NoteSlot><MessageSquare size={15} fill="#eee" /><NoteBadge>13</NoteBadge></NoteSlot>
      </Tray>
    </TaskBar>
    <GhostWindow>
      <GhostBtn><Copy size={9} strokeWidth={1} /></GhostBtn>
      <GhostBtn><Square size={9} strokeWidth={1} /></GhostBtn>
      <GhostBtn><X size={11} strokeWidth={1} /></GhostBtn>
    </GhostWindow>
  </Shell>
);

export default App;
